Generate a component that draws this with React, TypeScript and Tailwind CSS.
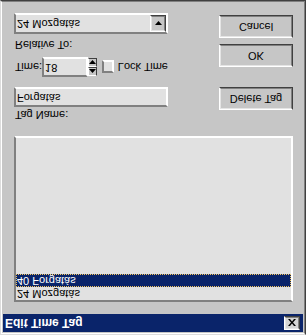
import React from 'react';

const sunken =
  'border-2 border-t-[#808080] border-l-[#808080] border-r-white border-b-white';
const raised =
  'border border-t-white border-l-white border-r-[#404040] border-b-[#404040]';
const raisedInner =
  'border border-t-[#e4e4e4] border-l-[#e4e4e4] border-r-[#808080] border-b-[#808080]';

function Button({ label, className }: { label: string; className?: string }) {
  return (
    <div className={`w-[74px] h-[23px] bg-[#c6c6c6] ${raised} ${className ?? ''}`}>
      <div className={`w-full h-full flex items-center justify-center ${raisedInner}`}>
        {label}
      </div>
    </div>
  );
}

function Arrow({ up }: { up?: boolean }) {
  return (
    <svg width="7" height="4" viewBox="0 0 7 4" className="block">
      {up ? <path d="M3.5 0 L7 4 L0 4 Z" fill="#000" /> : <path d="M0 0 L7 0 L3.5 4 Z" fill="#000" />}
    </svg>
  );
}

export default function App() {
  const items = [
    { id: 1, label: '24 Mozgatás', selected: false },
    { id: 2, label: '40 Forgatás', selected: true },
  ];

  return (
    <div className="w-[306px] h-[335px] -scale-y-100 bg-[#c6c6c6] border border-t-[#dcdcdc] border-l-[#dcdcdc] border-r-[#404040] border-b-[#404040] font-['Liberation_Sans',sans-serif] text-[11px] leading-[13px] text-black">
      <div className="w-full h-full border border-t-white border-l-white border-r-[#808080] border-b-[#808080] p-px flex flex-col">
        {/* title bar */}
        <div className="h-[18px] bg-[#0a246a] flex items-center justify-between pl-[2px] pr-[3px]">
          <span className="text-white font-bold text-[12px]">Edit Time Tag</span>
          <div className={`w-[16px] h-[14px] bg-[#d4d4d4] ${raised}`}>
            <div className={`w-full h-full flex items-center justify-center ${raisedInner}`}>
              <svg width="8" height="7" viewBox="0 0 8 7">
                <path d="M0 0 L2 0 L4 2.5 L6 0 L8 0 L5 3.5 L8 7 L6 7 L4 4.5 L2 7 L0 7 L3 3.5 Z" fill="#000" />
              </svg>
            </div>
          </div>
        </div>

        {/* tag list */}
        <div className={`mt-[12px] ml-[11px] w-[279px] h-[166px] bg-[#e1e1e1] ${sunken}`}>
          {items.map((item) => (
            <div
              key={item.id}
              className={`h-[13px] pl-[1px] whitespace-nowrap ${
                item.selected
                  ? 'bg-[#0a246a] text-white outline-1 outline-dotted outline-[#f2c45c] -outline-offset-1'
                  : ''
              }`}
            >
              {item.label}
            </div>
          ))}
        </div>

        <div className="flex ml-[11px]">
          {/* left column */}
          <div className="w-[154px] flex flex-col">
            <div className="mt-[15px] h-[14px] pl-px">Tag Name:</div>
            <div className={`h-[20px] bg-[#e1e1e1] ${sunken}`}>
              <div className="pl-px pt-[1px]">Forgatás</div>
            </div>

            <div className="mt-[10px] h-[20px] flex items-center">
              <span className="w-[30px] pl-px">Time:</span>
              <div className={`w-[54px] h-[20px] bg-[#e1e1e1] ${sunken}`}>
                <div className="pl-px pt-[1px]">18</div>
              </div>
              <div className="w-[11px] h-[18px] flex flex-col">
                <div className={`flex-1 bg-[#c6c6c6] ${raised} flex items-center justify-center`}>
                  <Arrow up />
                </div>
                <div className={`flex-1 bg-[#c6c6c6] ${raised} flex items-center justify-center`}>
                  <Arrow />
                </div>
              </div>
              <div className={`ml-[5px] w-[13px] h-[13px] bg-[#e1e1e1] ${sunken}`} />
              <span className="ml-[4px] whitespace-nowrap">Lock Time</span>
            </div>

            <div className="mt-[6px] h-[17px] pl-px">Relative To:</div>
            <div className={`h-[21px] bg-[#e1e1e1] ${sunken} flex items-center justify-between`}>
              <span className="pl-px">24 Mozgatás</span>
              <div className={`w-[16px] h-[17px] bg-[#c6c6c6] ${raised}`}>
                <div className={`w-full h-full flex items-center justify-center ${raisedInner}`}>
                  <Arrow />
                </div>
              </div>
            </div>
          </div>

          {/* buttons */}
          <div className="ml-[51px] flex flex-col">
            <Button label="Delete Tag" className="mt-[26px]" />
            <Button label="OK" className="mt-[20px]" />
            <Button label="Cancel" className="mt-[6px]" />
          </div>
        </div>
      </div>
    </div>
  );
}
